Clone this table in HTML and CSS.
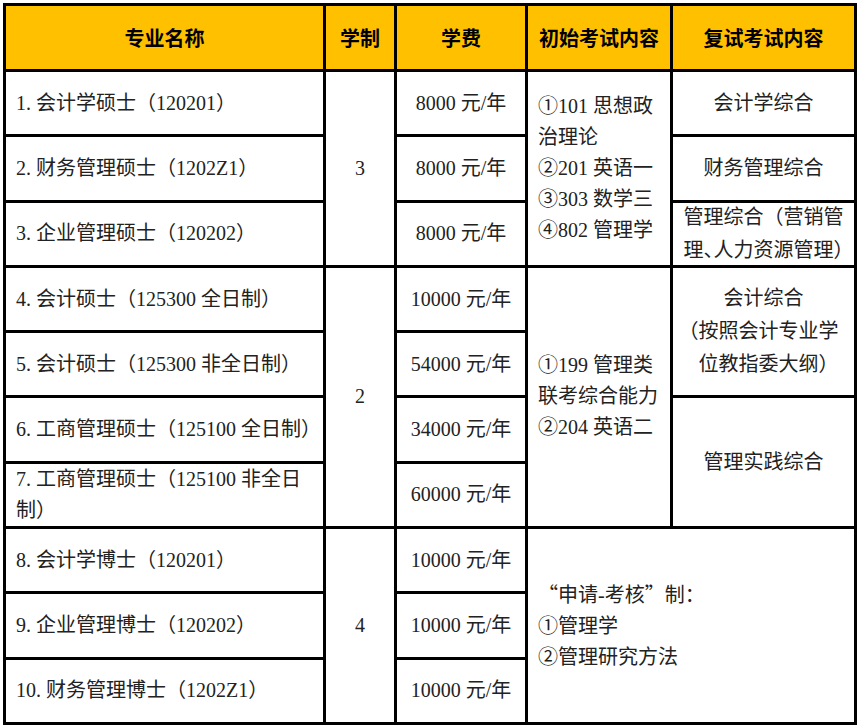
FILE: index.html
```html
<!DOCTYPE html>
<html lang="zh-CN">
<head>
<meta charset="utf-8">
<title>专业</title>
<link rel="stylesheet" href="styles.css">
</head>
<body>
<div class="grid">
  <div class="cell head">专业名称</div>
  <div class="cell head">学制</div>
  <div class="cell head">学费</div>
  <div class="cell head">初始考试内容</div>
  <div class="cell head">复试考试内容</div>

  <div class="cell name">1. 会计学硕士（120201）</div>
  <div class="cell center span3">3</div>
  <div class="cell center">8000 元/年</div>
  <div class="cell exam span3"><div>①101 思想政<br>治理论<br>②201 英语一<br>③303 数学三<br>④802 管理学</div></div>
  <div class="cell center">会计学综合</div>

  <div class="cell name">2. 财务管理硕士（1202Z1）</div>
  <div class="cell center">8000 元/年</div>
  <div class="cell center">财务管理综合</div>

  <div class="cell name">3. 企业管理硕士（120202）</div>
  <div class="cell center">8000 元/年</div>
  <div class="cell center"><div>管理综合（营销管<br>理<span class="half">、</span>人力资源管理<span class="half">）</span></div></div>

  <div class="cell name">4. 会计硕士（125300 全日制）</div>
  <div class="cell center span4">2</div>
  <div class="cell center">10000 元/年</div>
  <div class="cell exam span4"><div>①199 管理类<br>联考综合能力<br>②204 英语二</div></div>
  <div class="cell center span2"><div>会计综合<br><span class="half">（</span>按照会计专业学<br>位教指委大纲<span class="half">）</span></div></div>

  <div class="cell name">5. 会计硕士（125300 非全日制）</div>
  <div class="cell center">54000 元/年</div>

  <div class="cell name">6. 工商管理硕士（125100 全日制）</div>
  <div class="cell center">34000 元/年</div>
  <div class="cell center span2">管理实践综合</div>

  <div class="cell name"><div>7. 工商管理硕士（125100 非全日<br>制）</div></div>
  <div class="cell center">60000 元/年</div>

  <div class="cell name">8. 会计学博士（120201）</div>
  <div class="cell center span3">4</div>
  <div class="cell center">10000 元/年</div>
  <div class="cell exam span3 wide"><div><span class="cjk">“</span>申请-考核<span class="cjk">”</span>制：<br>①管理学<br>②管理研究方法</div></div>

  <div class="cell name">9. 企业管理博士（120202）</div>
  <div class="cell center">10000 元/年</div>

  <div class="cell name">10. 财务管理博士（1202Z1）</div>
  <div class="cell center">10000 元/年</div>
</div>
</body>
</html>
```

FILE: styles.css
```css
html, body {
  margin: 0;
  padding: 0;
  background: #fff;
}
body {
  padding: 3px;
  font-family: "Liberation Serif", "Noto Sans CJK SC", serif;
  font-size: 20px;
  color: #222;
}
.grid {
  display: grid;
  grid-template-columns: 317px 68px 128px 142px 181px;
  grid-template-rows: 63px repeat(10, minmax(0, 1fr));
  gap: 3px;
  padding: 3px;
  background: #000;
  width: 854px;
  height: 722px;
  box-sizing: border-box;
}
.cell {
  background: #fff;
  display: flex;
  align-items: center;
  line-height: 31px;
  white-space: nowrap;
  min-height: 0;
  overflow: visible;
}
.head {
  background: #ffc000;
  justify-content: center;
  font-family: "Noto Sans CJK SC", sans-serif;
  font-weight: 700;
  color: #000;
}
.name {
  padding-left: 10px;
}
.center {
  justify-content: center;
  text-align: center;
}
.exam {
  padding-left: 10px;
}
.span2 { grid-row: span 2; }
.span3 { grid-row: span 3; }
.span4 { grid-row: span 4; }
.wide { grid-column: span 2; }
.half {
  font-family: "Noto Sans CJK SC", sans-serif;
  font-feature-settings: "halt" 1;
}
.cjk {
  font-family: "Noto Sans CJK SC", sans-serif;
}
```
